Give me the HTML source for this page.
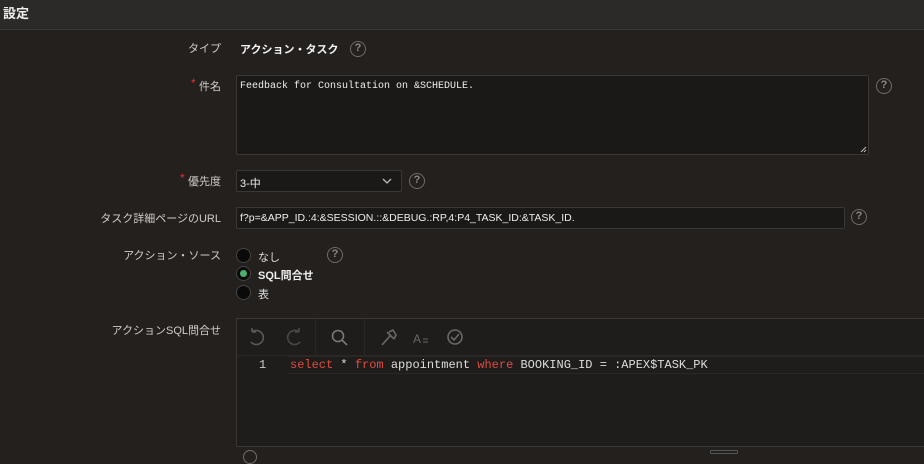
<!DOCTYPE html>
<html><head><meta charset="utf-8"><style>
*{box-sizing:border-box;margin:0;padding:0}
body{width:924px;height:456px;overflow:hidden;background:#23201e;font-family:"Liberation Sans","Noto Sans CJK JP",sans-serif;color:#d8d6d4;font-size:11px;position:relative}
.hdr{position:absolute;left:0;top:0;width:924px;height:30px;background:#2c2a28;border-bottom:1px solid #3a3735;font-weight:bold;font-size:13px;color:#eee;padding:3px 0 0 3px}
.lbl{position:absolute;right:703px;text-align:right;white-space:nowrap;color:#cfccc9;font-size:11px}
.req:before{content:"*";color:#d33;position:absolute;left:-8px;top:-5px;font-size:12px}
.help{position:absolute;width:16px;height:16px;border:1.5px solid #6e6b68;border-radius:50%;color:#8a8784;font-size:11px;font-weight:bold;text-align:center;line-height:13px}
.box{position:absolute;background:#1a1918;border:1px solid #3a3735;border-radius:2px}
.mono{font-family:"Liberation Mono","DejaVu Sans Mono",monospace;font-size:10px;color:#eee}
.radio{position:absolute;left:236px;width:15px;height:15px;border-radius:50%;background:#0a0a0a;border:1px solid #444}
.rt{position:absolute;left:258px;color:#ddd;font-size:11px}
</style></head><body>
<div class="hdr">設定</div>

<div class="lbl" style="top:40px">タイプ</div>
<div style="position:absolute;left:240px;top:41px;font-weight:bold;color:#f2f2f2;font-size:11px">アクション・タスク</div>
<div class="help" style="left:350px;top:41px">?</div>

<div class="lbl" style="top:78px"><span style="position:relative" class="req">件名</span></div>
<div class="box" style="left:236px;top:75px;width:633px;height:80px"><div class="mono" style="padding:5px 0 0 3px">Feedback for Consultation on &amp;SCHEDULE.</div>
<svg style="position:absolute;right:1px;bottom:1px" width="7" height="7"><path d="M1 6L6 1M4 6L6 4" stroke="#bbb" stroke-width="1"/></svg></div>
<div class="help" style="left:876px;top:78px">?</div>

<div class="lbl" style="top:173px"><span style="position:relative" class="req">優先度</span></div>
<div class="box" style="left:236px;top:170px;width:166px;height:22px;padding:4px 0 0 3px;color:#eee;font-size:11px">3-中
<svg style="position:absolute;left:145px;top:7px" width="10" height="7"><path d="M1 1L5 5L9 1" stroke="#bbb" fill="none" stroke-width="1.3"/></svg></div>
<div class="help" style="left:409px;top:173px">?</div>

<div class="lbl" style="top:210px">タスク詳細ページのURL</div>
<div class="box" style="left:236px;top:207px;width:609px;height:22px;padding:4px 0 0 3px;color:#eee;font-size:10.5px">f?p=&amp;APP_ID.:4:&amp;SESSION.::&amp;DEBUG.:RP,4:P4_TASK_ID:&amp;TASK_ID.</div>
<div class="help" style="left:851px;top:209px">?</div>

<div class="lbl" style="top:247px">アクション・ソース</div>
<div class="radio" style="top:248px"></div><div class="rt" style="top:249px">なし</div>
<div class="radio" style="top:266px"><div style="width:7px;height:7px;border-radius:50%;background:#4caf70;margin:3px"></div></div><div class="rt" style="top:267px;font-weight:bold;color:#eee">SQL問合せ</div>
<div class="radio" style="top:285px"></div><div class="rt" style="top:286px">表</div>
<div class="help" style="left:327px;top:247px">?</div>

<div class="lbl" style="top:322px">アクションSQL問合せ</div>
<div style="position:absolute;left:236px;top:318px;width:700px;height:129px;background:#1e1d1c;border:1px solid #3a3735">
 <div style="height:37px;border-bottom:1px solid #2a2827;position:relative">
  <div style="position:absolute;left:78px;top:0;width:1px;height:37px;background:#2a2827"></div>
  <div style="position:absolute;left:127px;top:0;width:1px;height:37px;background:#2a2827"></div>
  <svg width="240" height="37" style="position:absolute;left:0;top:0" fill="none" stroke-width="1.6">
   <path d="M15 13 A7 7 0 1 1 14 23 M15 13 V9 M15 13 H19" stroke="#5a5856"/>
   <path d="M62 13 A7 7 0 1 0 63 23 M62 13 V9 M62 13 H58" stroke="#4a4846"/>
   <circle cx="101" cy="17" r="5.5" stroke="#7a7876"/><path d="M105 21L110 26" stroke="#7a7876"/>
   <path d="M145 26L153 17 M150 13L157 20 M152 13L156 11L159 16L157 20" stroke="#6a6866"/>
   <text x="176" y="24" fill="#6a6866" stroke="none" font-size="12" font-family="Liberation Sans">A</text><path d="M186 20H191M186 23H191" stroke="#6a6866" stroke-width="1"/>
   <circle cx="218" cy="18" r="7" stroke="#6a6866"/><path d="M214 18L217 21L222 15" stroke="#6a6866"/>
  </svg>
 </div>
 <div style="position:relative;height:18px;font-family:'Liberation Mono','DejaVu Sans Mono',monospace;font-size:12px;line-height:18px">
  <span style="position:absolute;left:22px;color:#ccc">1</span>
  <div style="position:absolute;left:52px;top:0;width:660px;height:18px;border:1px solid #2a2827;border-left:none;border-right:none"></div>
  <span style="position:absolute;left:53px;color:#ddd;white-space:pre"><span style="color:#e04a3f">select</span> * <span style="color:#e04a3f">from</span> appointment <span style="color:#e04a3f">where</span> BOOKING_ID = :APEX$TASK_PK</span>
 </div>
</div>
<div style="position:absolute;left:243px;top:450px;width:14px;height:14px;border:1.5px solid #6e6b68;border-radius:50%"></div>
<div style="position:absolute;left:710px;top:450px;width:28px;height:4px;border:1px solid #555;border-radius:1px"></div>
</body></html>
